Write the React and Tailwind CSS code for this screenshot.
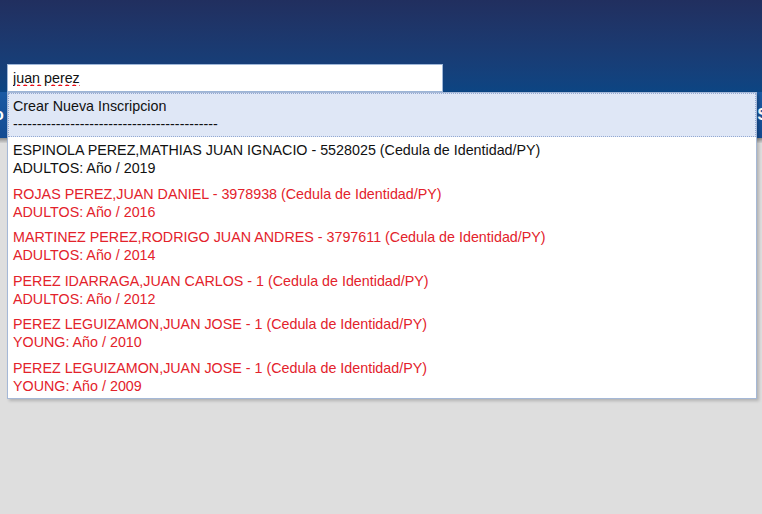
import React, { useState } from "react";

const results = [
  { name: "ESPINOLA PEREZ,MATHIAS JUAN IGNACIO - 5528025 (Cedula de Identidad/PY)", year: "ADULTOS: Año / 2019", red: false },
  { name: "ROJAS PEREZ,JUAN DANIEL - 3978938 (Cedula de Identidad/PY)", year: "ADULTOS: Año / 2016", red: true },
  { name: "MARTINEZ PEREZ,RODRIGO JUAN ANDRES - 3797611 (Cedula de Identidad/PY)", year: "ADULTOS: Año / 2014", red: true },
  { name: "PEREZ IDARRAGA,JUAN CARLOS - 1 (Cedula de Identidad/PY)", year: "ADULTOS: Año / 2012", red: true },
  { name: "PEREZ LEGUIZAMON,JUAN JOSE - 1 (Cedula de Identidad/PY)", year: "YOUNG: Año / 2010", red: true },
  { name: "PEREZ LEGUIZAMON,JUAN JOSE - 1 (Cedula de Identidad/PY)", year: "YOUNG: Año / 2009", red: true },
];

const App = () => {
  const [query, setQuery] = useState("juan perez");

  return (
    <div className="relative min-h-[514px] bg-[#dedede] font-['Liberation_Sans',sans-serif] text-[14.3px]">
      {/* header */}
      <div className="h-[92px] bg-gradient-to-b from-[#212f5f] to-[#0c4583] pt-[64px] pl-[7px]">
        <input
          type="text"
          value={query}
          onChange={(e) => setQuery(e.target.value)}
          className="w-[436px] h-[28px] bg-white border border-[#9fb7d8] px-[5px] text-[#111] outline-none underline decoration-wavy decoration-red-600"
        />
      </div>
      {/* menu bar */}
      <div className="h-[46px] bg-gradient-to-b from-[#1b5aa3] to-[#134b92] flex items-center justify-between text-white font-bold text-[16px] -mx-[6px]">
        <span>o</span>
        <span>S</span>
      </div>
      <div className="h-[5px] bg-gradient-to-b from-[#8d8d8d] to-[#d4d4d4]"></div>

      {/* autocomplete dropdown */}
      <div className="absolute left-[7px] top-[92px] w-[750px] bg-white border border-[#a5b8d6] shadow-[2px_2px_3px_rgba(0,0,0,0.2)] leading-[18px]">
        <div className="bg-[#dfe7f6] border border-dotted border-[#93a9d3] px-[4px] pt-[3px] pb-[3px] text-[#111]">
          <div>Crear Nueva Inscripcion</div>
          <div>-------------------------------------------</div>
        </div>
        {results.map((r, i) => (
          <div key={i} className={"px-[5px] pt-[4px] pb-[3.5px] " + (r.red ? "text-[#e3222b]" : "text-[#111]")}>
            <div>{r.name}</div>
            <div>{r.year}</div>
          </div>
        ))}
      </div>
    </div>
  );
};

export default App;
